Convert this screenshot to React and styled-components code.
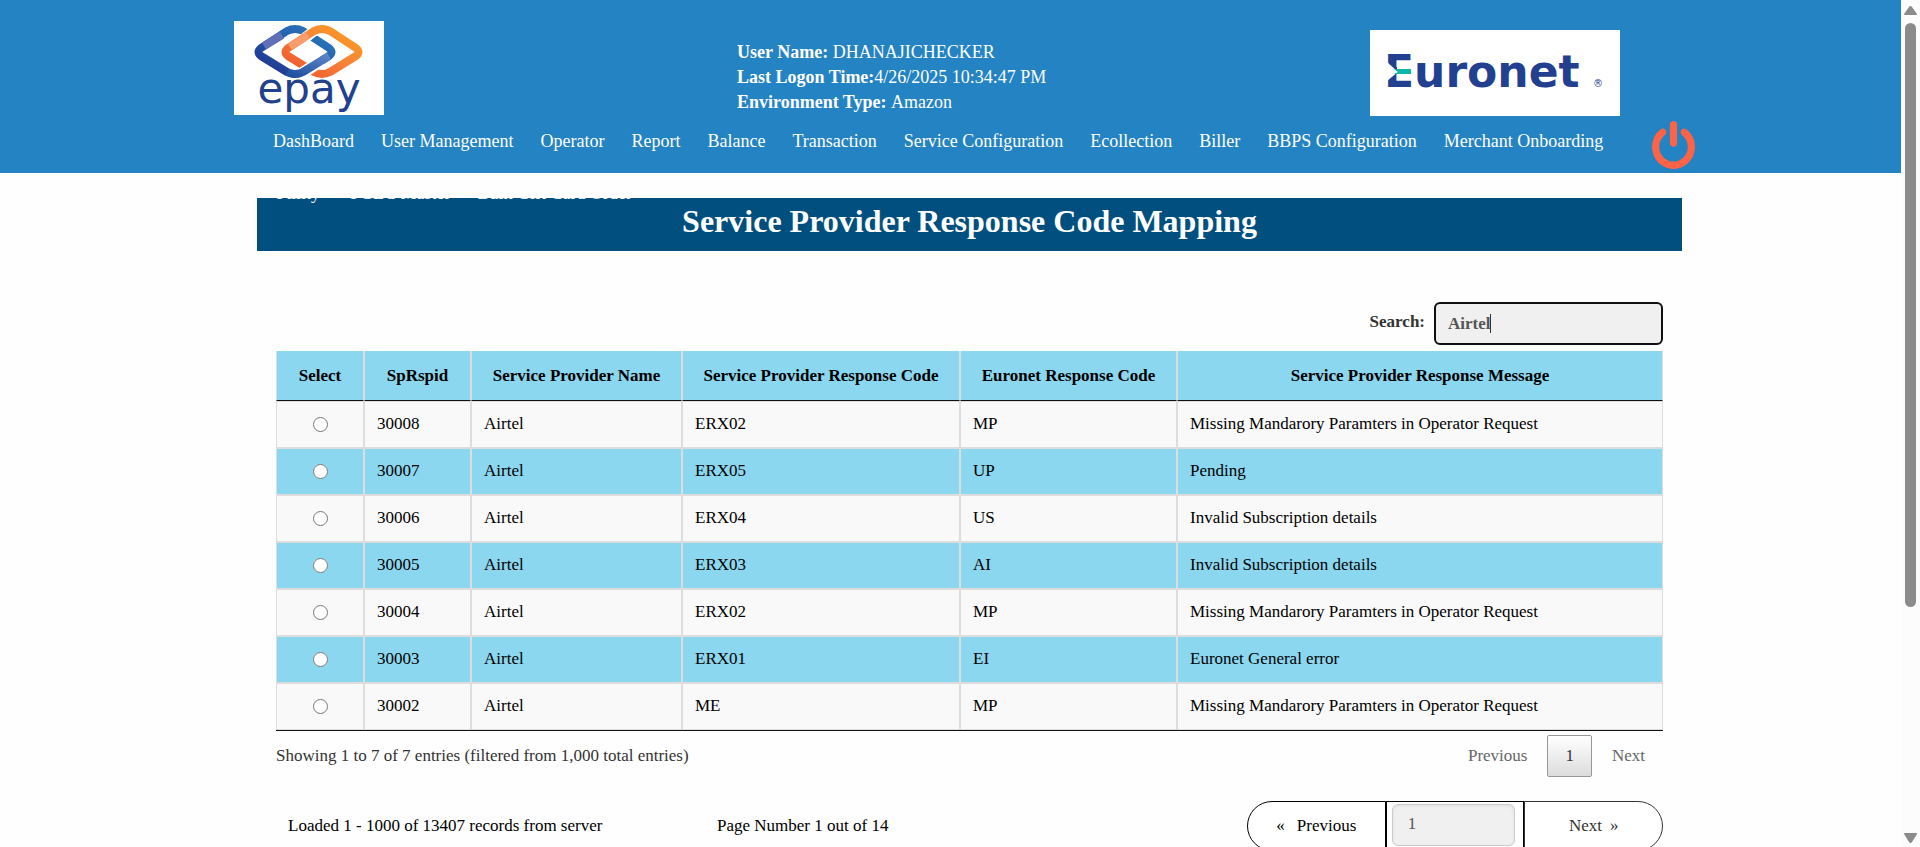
import React, { useState } from "react";
import styled, { createGlobalStyle, css } from "styled-components";

const GlobalStyle = createGlobalStyle`
  * { box-sizing: border-box; }
  body {
    margin: 0;
    overflow: hidden;
    background: #fefefe;
    color: #000;
    font: 17px/24px "Liberation Serif", "Times New Roman", serif;
  }
  button, input { font: inherit; }
  button { margin: 0; cursor: pointer; }
`;

const Page = styled.div`
  display: grid;
  grid-template-columns: minmax(0, 1fr) 19px;
  height: 100vh;
`;

const Content = styled.div`
  min-width: 0;
  overflow: hidden;
`;

const Header = styled.header`
  position: relative;
  z-index: 1;
  height: 173px;
  background: #2483c3;
  color: #fff;
  font-size: 18px;
`;

const Brand = styled.div`
  display: flex;
  align-items: flex-start;
  height: 116px;
  padding: 21px 281px 0 234px;
`;

const EpayLogo = styled.svg`
  flex: none;
  width: 150px;
  height: 94px;
  background: #fff;
`;

const EuronetLogo = styled.svg`
  flex: none;
  width: 250px;
  height: 86px;
  margin: 9px 0 0 auto;
  background: #fff;
`;

const Session = styled.dl`
  margin: 19px 0 0 353px;
  line-height: 25px;
  white-space: nowrap;
  dt, dd { display: inline; margin: 0; }
  dt { font-weight: bold; }
`;

const NavRow = styled.div`
  display: flex;
  align-items: flex-start;
  padding: 0 206px 0 273px;
`;

const Nav = styled.nav`
  flex: 1;
  display: flex;
  flex-wrap: wrap;
  gap: 30px 27px;
  margin: 14px 12px 0 0;
  line-height: 22px;
`;

const NavLink = styled.a`
  color: #fff;
  text-decoration: none;
  white-space: nowrap;
`;

const PowerButton = styled.button`
  flex: none;
  margin-top: 5px;
  padding: 0;
  border: 0;
  background: none;
  color: tomato;
  svg { display: block; width: 43px; height: 48px; }
`;

const Main = styled.main`
  margin: 25px 219px 0 257px;
`;

const Title = styled.h1`
  margin: 0;
  padding-bottom: 7px;
  background: #004f7f;
  color: #fff;
  font-size: 32px;
  line-height: 46px;
  text-align: center;
`;

const Panel = styled.section`
  padding: 51px 19px 0;
`;

const SearchRow = styled.div`
  display: flex;
  justify-content: flex-end;
  gap: 9px;
  margin-bottom: 6px;
  color: #333;
  font-weight: bold;
  label { line-height: 40px; }
`;

const field = css`
  border-radius: 6px;
  background: #f0f0f0;
  color: #555;
`;

const SearchBox = styled.div`
  position: relative;
`;

const SearchInput = styled.input`
  ${field}
  display: block;
  width: 229px;
  height: 43px;
  padding: 0 12px;
  border: 2px solid #101010;
  outline: none;
  caret-color: transparent;
`;

/* The invisible copy of the query puts the caret right after its last letter. */
const Caret = styled.span`
  position: absolute;
  top: 12px;
  left: 14px;
  height: 19px;
  border-right: 1px solid #333;
  color: transparent;
  line-height: 19px;
  white-space: pre;
  pointer-events: none;
  &::before { content: "${(p) => p.$text}"; }
`;

const Table = styled.table`
  width: 100%;
  table-layout: fixed;
  border-collapse: separate;
  border-spacing: 0;
  border-bottom: 1px solid #111;
`;

const Col = styled.col`
  width: ${(p) => (p.$width ? `${p.$width}px` : "auto")};
`;

const HeadCell = styled.th`
  height: 50px;
  padding: 0;
  border: solid #ddd;
  border-width: 0 1px;
  border-bottom: 1px solid #111;
  background: #8bd7ef;
`;

const Row = styled.tr`
  background: ${(p) => (p.$shaded ? "#8bd7ef" : "#f9f9f9")};
`;

const Cell = styled.td`
  height: 47px;
  padding: 0 12px 2px;
  border: 1px solid #ddd;
  text-align: ${(p) => (p.$center ? "center" : "left")};
  input {
    display: block;
    width: 15px;
    height: 15px;
    margin: 2px auto 0;
  }
`;

const Footer = styled.div`
  display: flex;
  align-items: center;
  justify-content: space-between;
  margin-top: 4px;
  color: #333;
`;

const Pages = styled.div`
  display: flex;
  gap: 2px;
`;

const PageButton = styled.button`
  height: 42px;
  padding: 0 17px;
  border: 1px solid ${(p) => (p.$current ? "#979797" : "transparent")};
  border-radius: 2px;
  background: ${(p) => (p.$current ? "linear-gradient(#fff, #dcdcdc)" : "none")};
  color: ${(p) => (p.$current ? "#333" : "#666")};
`;

const ServerRow = styled.div`
  display: grid;
  grid-template-columns: 429px 1fr 416px;
  align-items: center;
  margin-top: 24px;
`;

const ServerNote = styled.span`
  padding-left: 12px;
`;

const Stepper = styled.div`
  display: grid;
  grid-template-columns: repeat(3, 1fr);
  height: 50px;
`;

const StepButton = styled.button`
  display: flex;
  align-items: center;
  justify-content: center;
  gap: ${(p) => (p.$side === "left" ? 12 : 8)}px;
  padding: 0;
  border: 1px solid ${(p) => (p.$side === "left" ? "#000" : "#333")};
  border-radius: ${(p) => (p.$side === "left" ? "25px 0 0 25px" : "0 25px 25px 0")};
  background: #fff;
  color: ${(p) => (p.$side === "left" ? "#000" : "#333")};
`;

const StepField = styled.div`
  padding: 2px 8px 0 5px;
  border: 1px solid #000;
  input {
    ${field}
    display: block;
    width: 100%;
    height: 42px;
    padding: 0 15px 2px;
    border: 1px solid #ccc;
    box-shadow: inset 0 1px 3px #ddd;
  }
`;

const ScrollTrack = styled.div`
  display: flex;
  flex-direction: column;
  align-items: center;
  height: 100vh;
  padding: 6px 0 4px;
  background: #fcfcfc;
  svg { display: block; flex: none; }
`;

const ScrollThumb = styled.div`
  width: 11px;
  height: 69vh;
  margin: 8px 0 auto;
  border-radius: 6px;
  background: #8b8b8b;
`;

const menu = [
  "DashBoard", "User Management", "Operator", "Report", "Balance", "Transaction",
  "Service Configuration", "Ecollection", "Biller", "BBPS Configuration",
  "Merchant Onboarding", "Utility", "UGEC Master", "Bulk Gift Card Order",
];

const columns = [
  ["Select", 88], ["SpRspid", 107], ["Service Provider Name", 211],
  ["Service Provider Response Code", 278], ["Euronet Response Code", 217],
  ["Service Provider Response Message"],
];

const missing = "Missing Mandarory Paramters in Operator Request";
const rows = [
  ["30008", "Airtel", "ERX02", "MP", missing],
  ["30007", "Airtel", "ERX05", "UP", "Pending"],
  ["30006", "Airtel", "ERX04", "US", "Invalid Subscription details"],
  ["30005", "Airtel", "ERX03", "AI", "Invalid Subscription details"],
  ["30004", "Airtel", "ERX02", "MP", missing],
  ["30003", "Airtel", "ERX01", "EI", "Euronet General error"],
  ["30002", "Airtel", "ME", "MP", missing],
];

function Epay() {
  const diamond = (x) =>
    `M${x - 34} 27 L${x - 8} 10 Q${x} 6 ${x + 8} 10 L${x + 34} 27 Q${x + 39} 31 ${x + 34} 35 L${x + 8} 51 Q${x} 55 ${x - 8} 51 L${x - 34} 35 Q${x - 39} 31 ${x - 34} 27 Z`;
  return (
    <EpayLogo viewBox="0 0 150 94" role="img" aria-label="epay">
      <defs>
        <linearGradient id="blue" x1="0" y1="1" x2="1" y2="0">
          <stop offset="0" stopColor="#242a88" />
          <stop offset="0.5" stopColor="#1f5cab" />
          <stop offset="1" stopColor="#2f7cc0" />
        </linearGradient>
        <linearGradient id="orange" x1="0" y1="1" x2="1" y2="0">
          <stop offset="0" stopColor="#f0502a" />
          <stop offset="0.5" stopColor="#f6813a" />
          <stop offset="1" stopColor="#f9a01f" />
        </linearGradient>
        <linearGradient id="blueSide" x1="0" y1="1" x2="1" y2="0">
          <stop offset="0" stopColor="#1f4f9f" />
          <stop offset="1" stopColor="#5d84c6" />
        </linearGradient>
      </defs>
      <g fill="none" strokeLinejoin="round">
        <path d={diamond(61)} stroke="url(#blue)" strokeWidth="8" />
        <path d="M30 25 L48 14" stroke="#5f70b8" strokeWidth="8" />
        <path d="M59 26 L80 10 Q88 6 92 9" stroke="#fff" strokeWidth="11" />
        <path d={diamond(88)} stroke="url(#orange)" strokeWidth="8" />
        <path d="M56 26 L74 14" stroke="#f79c6a" strokeWidth="8" />
        <path d="M88 39 L67 53" stroke="#fff" strokeWidth="12" />
        <path d="M95 35 L69 51 Q61 55 53 51" stroke="url(#blueSide)" strokeWidth="8" />
      </g>
      <text x="75" y="82" textAnchor="middle" fill="#22418c"
        fontFamily="DejaVu Sans" fontSize="42">epay</text>
    </EpayLogo>
  );
}

function Euronet() {
  return (
    <EuronetLogo viewBox="0 0 250 86" role="img" aria-label="Euronet">
      <text x="14" y="57" fill="#233f90" fontFamily="DejaVu Sans" fontWeight="bold" fontSize="44">Euronet</text>
      <rect x="27" y="32" width="18" height="18" fill="#fff" />
      <path d="M17 32 L28 42 L17 51 Z" fill="#fff" />
      <path d="M24 39 H41 V44 H24 L28 42 Z" fill="#0db8a9" />
      <text x="223" y="57" fill="#233f90" fontFamily="DejaVu Sans" fontSize="10">®</text>
    </EuronetLogo>
  );
}

export default function App() {
  const [query, setQuery] = useState("Airtel");
  const [page, setPage] = useState("1");
  return (
    <>
      <GlobalStyle />
      <Page>
        <Content>
          <Header>
            <Brand>
              <Epay />
              <Session>
                <div><dt>User Name:</dt> <dd>DHANAJICHECKER</dd></div>
                <div><dt>Last Logon Time:</dt><dd>4/26/2025 10:34:47 PM</dd></div>
                <div><dt>Environment Type:</dt> <dd>Amazon</dd></div>
              </Session>
              <Euronet />
            </Brand>
            <NavRow>
              <Nav aria-label="Main menu">
                {menu.map((name) => <NavLink key={name} href="#">{name}</NavLink>)}
              </Nav>
              <PowerButton type="button" aria-label="Log out">
                <svg viewBox="128 0 1536 1664" preserveAspectRatio="none" fill="currentColor">
                  <path d="M1664 896q0 156-61 298t-164 245-245 164-298 61-298-61-245-164-164-245-61-298q0-182 80.500-343t226.500-270q43-32 95.500-25t83.500 50q32 42 24.500 94.500t-49.500 84.500q-98 74-151.500 181t-53.500 228q0 104 40.500 198.500t109.500 163.500 163.500 109.500 198.500 40.500 198.500-40.500 163.500-109.500 109.500-163.500 40.500-198.500q0-121-53.500-228t-151.500-181q-42-32-49.500-84.500t24.500-94.500q31-43 84-50t95 25q146 109 226.500 270t80.500 343zM1024 128v640q0 52-38 90t-90 38-90-38-38-90v-640q0-52 38-90t90-38 90 38 38 90z" />
                </svg>
              </PowerButton>
            </NavRow>
          </Header>
          <Main>
            <Title>Service Provider Response Code Mapping</Title>
            <Panel>
              <SearchRow>
                <label htmlFor="search">Search:</label>
                <SearchBox>
                  <SearchInput id="search" type="text" autoFocus value={query}
                    onChange={(e) => setQuery(e.target.value)} />
                  <Caret $text={query} aria-hidden="true" />
                </SearchBox>
              </SearchRow>
              <Table>
                <colgroup>
                  {columns.map(([name, width]) => <Col key={name} $width={width} />)}
                </colgroup>
                <thead>
                  <tr>{columns.map(([name]) => <HeadCell key={name} scope="col">{name}</HeadCell>)}</tr>
                </thead>
                <tbody>
                  {rows.map((row, i) => (
                    <Row key={row[0]} $shaded={i % 2 === 1}>
                      <Cell $center>
                        <input type="radio" name="record" aria-label={`Select ${row[0]}`} />
                      </Cell>
                      {row.map((text, j) => <Cell key={j}>{text}</Cell>)}
                    </Row>
                  ))}
                </tbody>
              </Table>
              <Footer>
                <span>Showing 1 to 7 of 7 entries (filtered from 1,000 total entries)</span>
                <Pages>
                  <PageButton type="button">Previous</PageButton>
                  <PageButton type="button" $current>1</PageButton>
                  <PageButton type="button">Next</PageButton>
                </Pages>
              </Footer>
              <ServerRow>
                <ServerNote>Loaded 1 - 1000 of 13407 records from server</ServerNote>
                <ServerNote>Page Number 1 out of 14</ServerNote>
                <Stepper>
                  <StepButton type="button" $side="left"><span aria-hidden="true">«</span>Previous</StepButton>
                  <StepField>
                    <input type="text" aria-label="Page number" value={page}
                      onChange={(e) => setPage(e.target.value)} />
                  </StepField>
                  <StepButton type="button" $side="right">Next<span aria-hidden="true">»</span></StepButton>
                </Stepper>
              </ServerRow>
            </Panel>
          </Main>
        </Content>
        <ScrollTrack aria-hidden="true">
          <svg width="13" height="9" viewBox="0 0 13 9" fill="#8b8b8b"><path d="M6.500 0 Q7.500 0 8 1 L13 8 Q13 9 12 9 H1 Q0 9 0 8 L5 1 Q5.500 0 6.500 0Z" /></svg>
          <ScrollThumb />
          <svg width="13" height="10" viewBox="0 0 13 10" fill="#8b8b8b"><path d="M6.500 10 Q7.500 10 8 9 L13 1 Q13 0 12 0 H1 Q0 0 0 1 L5 9 Q5.500 10 6.500 10Z" /></svg>
        </ScrollTrack>
      </Page>
    </>
  );
}
